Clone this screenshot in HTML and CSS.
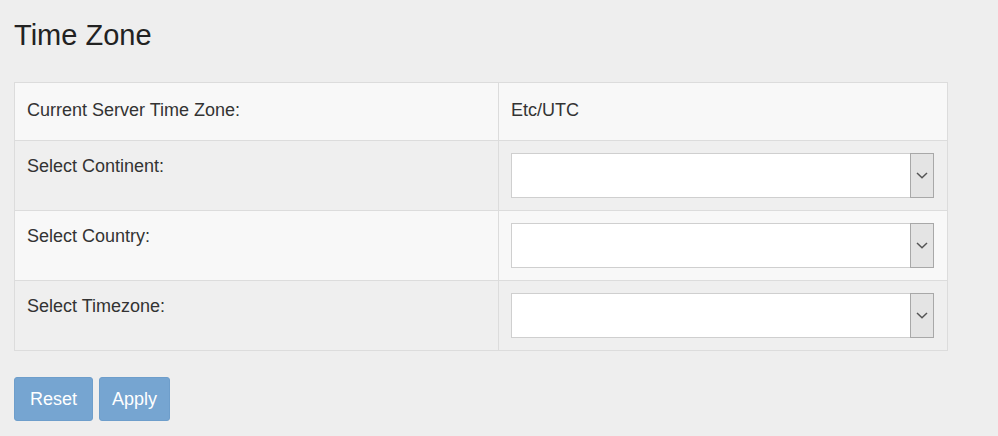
FILE: index.html
```html
<!DOCTYPE html>
<html lang="en">
<head>
	<meta charset="UTF-8">
	<title>Time Zone</title>
	<link rel="stylesheet" href="styles.css">
</head>
<body>
<div id="page">
	<h3 class="title">Time Zone</h3>
	<table class="tz-table">
		<tr class="row-first">
			<td class="label">Current Server Time Zone:</td>
			<td class="value">Etc/UTC</td>
		</tr>
		<tr class="row-odd">
			<td class="label">Select Continent:</td>
			<td class="value">
				<div class="select"><span class="arrow"><svg width="12" height="7" viewBox="0 0 12 7"><path d="M1 1 L6 5.8 L11 1" fill="none" stroke="#555" stroke-width="1.5"/></svg></span></div>
			</td>
		</tr>
		<tr>
			<td class="label">Select Country:</td>
			<td class="value">
				<div class="select"><span class="arrow"><svg width="12" height="7" viewBox="0 0 12 7"><path d="M1 1 L6 5.8 L11 1" fill="none" stroke="#555" stroke-width="1.5"/></svg></span></div>
			</td>
		</tr>
		<tr class="row-odd">
			<td class="label">Select Timezone:</td>
			<td class="value">
				<div class="select"><span class="arrow"><svg width="12" height="7" viewBox="0 0 12 7"><path d="M1 1 L6 5.8 L11 1" fill="none" stroke="#555" stroke-width="1.5"/></svg></span></div>
			</td>
		</tr>
	</table>
	<!-- /.tz-table -->
	<div class="buttons">
		<button class="btn" type="button">Reset</button>
		<button class="btn btn-apply" type="button">Apply</button>
	</div>
</div>
</body>
</html>
```
FILE: styles.css
```css
* {
	padding: 0;
	margin: 0;
	box-sizing: border-box;
}

body {
	background-color: #eeeeee;
	font-family: "Liberation Sans", Arial, sans-serif;
	color: #333;
}

#page {
	padding: 19px 51px 0 14px;
}

.title {
	font-size: 29px;
	font-weight: normal;
	line-height: 32px;
	color: #222;
	height: 63px;
}

.tz-table {
	width: 934px;
	border-collapse: collapse;
	font-size: 18px;
}

.tz-table td {
	border: 1px solid #dcdcdc;
	vertical-align: top;
	height: 70px;
	padding: 12px;
	line-height: 26px;
	background-color: #f8f8f8;
}

.tz-table .label {
	width: 484px;
}

.tz-table .row-first td {
	height: 58px;
	padding-top: 14px;
}

.tz-table .row-odd td {
	background-color: #efefef;
}

.tz-table td.value {
	padding-right: 13px;
}

.select {
	height: 45px;
	background-color: #fff;
	border: 1px solid #cfcfcf;
	display: flex;
	justify-content: flex-end;
}

.arrow {
	width: 24px;
	margin: -1px -1px -1px 0;
	border: 1px solid #a8a8a8;
	background-color: #e4e4e4;
	display: flex;
	align-items: center;
	justify-content: center;
}

.buttons {
	display: flex;
	gap: 6px;
	padding-top: 26px;
}

.btn {
	height: 44px;
	padding: 0 15px;
	border: 1px solid #6e9ecb;
	border-radius: 3px;
	background-color: #76a5d1;
	color: #fff;
	font-family: "Liberation Sans", Arial, sans-serif;
	font-size: 18px;
}

.btn-apply {
	padding: 0 12px;
}
```
